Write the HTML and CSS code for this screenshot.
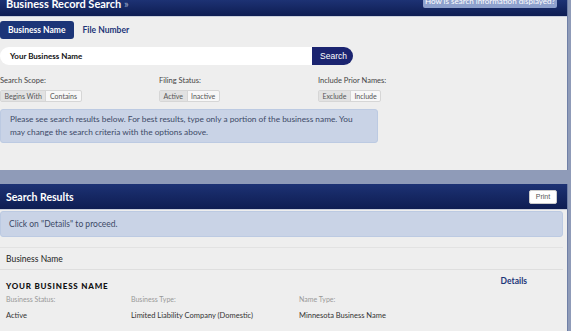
FILE: index.html
```html
<!DOCTYPE html>
<html lang="en">
<head>
    <meta charset="UTF-8">
    <title>Business Record Search</title>
    <link rel="stylesheet" href="styles.css">
</head>
<body>

<div class="panel top-panel">
    <div class="panel-head">
        <h1 class="head-title">Business Record Search <span class="raquo">&raquo;</span></h1>
        <button class="help-btn">How is search information displayed?</button>
    </div>
    <div class="panel-body">
        <div class="tabs">
            <span class="tab active">Business Name</span>
            <span class="tab">File Number</span>
        </div>
        <div class="search-row">
            <div class="search-input">Your Business Name</div>
            <button class="search-btn">Search</button>
        </div>
        <div class="options">
            <div class="option">
                <label>Search Scope:</label>
                <div class="seg">
                    <span class="on">Begins With</span><span>Contains</span>
                </div>
            </div>
            <div class="option">
                <label>Filing Status:</label>
                <div class="seg">
                    <span class="on">Active</span><span>Inactive</span>
                </div>
            </div>
            <div class="option">
                <label>Include Prior Names:</label>
                <div class="seg">
                    <span class="on">Exclude</span><span>Include</span>
                </div>
            </div>
        </div>
        <div class="note note-narrow">
            Please see search results below. For best results, type only a portion of the business name. You may change the search criteria with the options above.
        </div>
    </div>
</div>

<div class="panel results-panel">
    <div class="panel-head results-head">
        <h2 class="results-title">Search Results</h2>
        <button class="print-btn">Print</button>
    </div>
    <div class="panel-body results-body">
        <div class="note">Click on "Details" to proceed.</div>
        <div class="col-head">Business Name</div>
        <div class="result">
            <div class="result-top">
                <span class="biz-name">YOUR BUSINESS NAME</span>
                <a class="details" href="#">Details</a>
            </div>
            <div class="result-grid">
                <span class="lbl">Business Status:</span>
                <span class="lbl">Business Type:</span>
                <span class="lbl">Name Type:</span>
                <span class="val">Active</span>
                <span class="val">Limited Liability Company (Domestic)</span>
                <span class="val">Minnesota Business Name</span>
            </div>
        </div>
    </div>
</div>

</body>
</html>
```

FILE: styles.css
```css
body {
    margin: 0;
    background-color: #8f9bb8;
    font-family: Lato, "Liberation Sans", sans-serif;
    color: #333;
    overflow: hidden;
}
.panel {
    width: 567px;
    background: #eeeeee;
    border-right: 1px solid #6f7fa6;
}
.panel-head {
    display: flex;
    justify-content: space-between;
    align-items: flex-start;
    background: linear-gradient(#1d3274, #0e1d52);
    height: 16px;
    overflow: hidden;
    border-bottom: 1px solid #c9cfdc;
}
.head-title {
    margin: -4px 0 0 6px;
    font-size: 11px;
    line-height: 16px;
    font-weight: bold;
    color: white;
}
.raquo {
    color: #9aa8cc;
    font-weight: normal;
}
.help-btn {
    margin: -5px 10px 0 0;
    width: 134px;
    height: 13px;
    padding: 0;
    border: none;
    border-radius: 2px;
    background: #8ea1cd;
    color: white;
    font-family: Lato, "Liberation Sans", sans-serif;
    font-size: 8px;
    line-height: 13px;
    text-align: center;
    white-space: nowrap;
    overflow: hidden;
}
.panel-body {
    padding: 4px 0 27px 0;
}
.tabs {
    display: flex;
    align-items: center;
    gap: 3px;
}
.tab {
    padding: 0 6px;
    height: 18px;
    line-height: 18px;
    font-size: 8.5px;
    font-weight: bold;
    color: #1c3578;
}
.tab.active {
    background: #1c3578;
    color: white;
    border-radius: 3px;
    padding: 0 8px;
}
.search-row {
    display: flex;
    margin-top: 8px;
}
.search-input {
    width: 302px;
    height: 18px;
    line-height: 18px;
    padding-left: 10px;
    background: white;
    border-radius: 9px 0 0 9px;
    font-size: 8px;
    font-weight: bold;
    color: #111;
}
.search-btn {
    width: 41px;
    height: 18px;
    padding: 0 0 0 2px;
    border: none;
    border-radius: 0 9px 9px 0;
    background: #1b2470;
    color: white;
    font-family: "Liberation Sans", sans-serif;
    font-size: 8.5px;
}
.options {
    display: flex;
    margin-top: 11px;
}
.option {
    width: 159px;
}
.option label {
    display: block;
    font-size: 7.5px;
    line-height: 10px;
    height: 10px;
    color: #444;
}
.seg {
    display: flex;
    width: fit-content;
    margin-top: 4px;
    border: 1px solid #d6d6d6;
    border-radius: 2px;
    background: #f7f7f7;
}
.seg span {
    padding: 0 3.5px;
    height: 10px;
    line-height: 10px;
    font-size: 7px;
    color: #555;
}
.seg span + span {
    border-left: 1px solid #d6d6d6;
}
.seg .on {
    background: #e2e2e2;
}
.note {
    margin-top: 7px;
    padding: 3px 9px;
    background: #c9d3e6;
    border: 1px solid #bccae2;
    border-radius: 3px;
    font-size: 8.3px;
    line-height: 13px;
    color: #3d4a66;
}
.note-narrow {
    width: 358px;
}
.results-panel {
    margin-top: 14px;
}
.results-head {
    height: 25px;
    align-items: center;
    padding-right: 10px;
}
.results-title {
    margin: 0 0 0 6px;
    font-size: 10.5px;
    font-weight: bold;
    color: white;
}
.print-btn {
    width: 28px;
    height: 14px;
    padding: 0;
    border: 1px solid #ccc;
    border-radius: 2px;
    background: white;
    color: #555;
    font-family: "Liberation Sans", sans-serif;
    font-size: 7px;
}
.results-body {
    padding: 1px 4px 20px 0;
}
.results-body .note {
    margin-top: 0;
    padding: 6px 8px;
    font-size: 8.5px;
    line-height: 12px;
}
.col-head {
    margin-top: 10px;
    border-top: 1px solid #e2e2e2;
    border-bottom: 1px solid #dedede;
    padding: 5px 6px 4px;
    font-size: 8.5px;
    line-height: 12px;
    color: #222;
}
.result {
    padding: 6px 6px 0;
}
.result-top {
    display: flex;
    justify-content: space-between;
    align-items: flex-start;
}
.biz-name {
    margin-top: 5px;
    font-size: 8px;
    font-weight: 900;
    letter-spacing: 0.8px;
    color: #111;
}
.details {
    margin-right: 30px;
    font-size: 8.5px;
    font-weight: bold;
    color: #1c3578;
    text-decoration: none;
}
.result-grid {
    display: grid;
    grid-template-columns: 125px 168px auto;
    row-gap: 8px;
    margin-top: 4px;
}
.lbl {
    font-size: 7px;
    color: #999;
}
.val {
    font-size: 7.5px;
    color: #333;
}
```
